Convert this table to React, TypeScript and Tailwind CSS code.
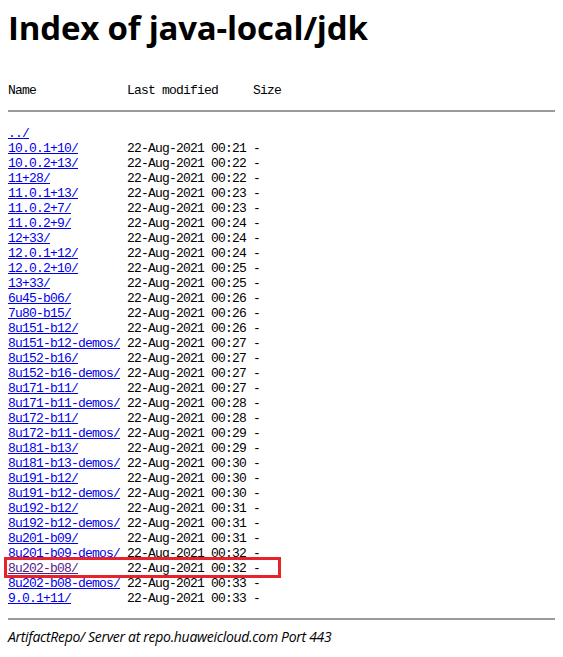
import React from 'react';

const rows: [string, string, boolean?][] = [
  ['10.0.1+10/', '22-Aug-2021 00:21'],
  ['10.0.2+13/', '22-Aug-2021 00:22'],
  ['11+28/', '22-Aug-2021 00:22'],
  ['11.0.1+13/', '22-Aug-2021 00:23'],
  ['11.0.2+7/', '22-Aug-2021 00:23'],
  ['11.0.2+9/', '22-Aug-2021 00:24'],
  ['12+33/', '22-Aug-2021 00:24'],
  ['12.0.1+12/', '22-Aug-2021 00:24'],
  ['12.0.2+10/', '22-Aug-2021 00:25'],
  ['13+33/', '22-Aug-2021 00:25'],
  ['6u45-b06/', '22-Aug-2021 00:26'],
  ['7u80-b15/', '22-Aug-2021 00:26'],
  ['8u151-b12/', '22-Aug-2021 00:26'],
  ['8u151-b12-demos/', '22-Aug-2021 00:27'],
  ['8u152-b16/', '22-Aug-2021 00:27'],
  ['8u152-b16-demos/', '22-Aug-2021 00:27'],
  ['8u171-b11/', '22-Aug-2021 00:27'],
  ['8u171-b11-demos/', '22-Aug-2021 00:28'],
  ['8u172-b11/', '22-Aug-2021 00:28'],
  ['8u172-b11-demos/', '22-Aug-2021 00:29'],
  ['8u181-b13/', '22-Aug-2021 00:29'],
  ['8u181-b13-demos/', '22-Aug-2021 00:30'],
  ['8u191-b12/', '22-Aug-2021 00:30'],
  ['8u191-b12-demos/', '22-Aug-2021 00:30'],
  ['8u192-b12/', '22-Aug-2021 00:31'],
  ['8u192-b12-demos/', '22-Aug-2021 00:31'],
  ['8u201-b09/', '22-Aug-2021 00:31'],
  ['8u201-b09-demos/', '22-Aug-2021 00:32'],
  ['8u202-b08/', '22-Aug-2021 00:32', true],
  ['8u202-b08-demos/', '22-Aug-2021 00:33'],
  ['9.0.1+11/', '22-Aug-2021 00:33'],
];

const mono = "font-['Liberation_Mono',monospace] text-[13px] leading-[15px] tracking-[-0.8px] whitespace-pre text-black";

function pad(s: string, n: number) {
  return ' '.repeat(Math.max(1, n - s.length));
}

export default function App() {
  return (
    <div className="relative bg-white min-h-[657px] px-2 pt-[1px] text-black">
      {/* 标题 */}
      <h1 className="mt-[7px] font-['Open_Sans',sans-serif] text-[33px] font-bold leading-[40px] tracking-[-0.2px]">
        Index of java-local/jdk
      </h1>

      <div className={`${mono} mt-[35px]`}>
        {'Name' + pad('Name', 17) + 'Last modified' + '     ' + 'Size'}
      </div>
      <hr className="mt-[12px] border-0 border-t-2 border-t-[#9a9a9a] h-0" />

      <div className={`${mono} mt-[14px]`}>
        <div>
          <a href="#" className="text-[#0000ee] underline">../</a>
        </div>
        {rows.map(([name, date, visited]) => (
          <div key={name}>
            <a href="#" className={visited ? 'text-[#551a8b] underline' : 'text-[#0000ee] underline'}>
              {name}
            </a>
            {pad(name, 17) + date + ' -'}
          </div>
        ))}
      </div>
      <hr className="mt-[12px] border-0 border-t-2 border-t-[#9a9a9a] h-0" />

      <div className="mt-[7px] font-['Open_Sans',sans-serif] italic text-[14px] leading-[20px] tracking-[-0.3px]">
        ArtifactRepo/ Server at repo.huaweicloud.com Port 443
      </div>

      {/* 标注框 */}
      <div className="absolute left-[4px] top-[557px] w-[277px] h-[21px] border-[3px] border-[#e8222a] pointer-events-none" />
    </div>
  );
}
